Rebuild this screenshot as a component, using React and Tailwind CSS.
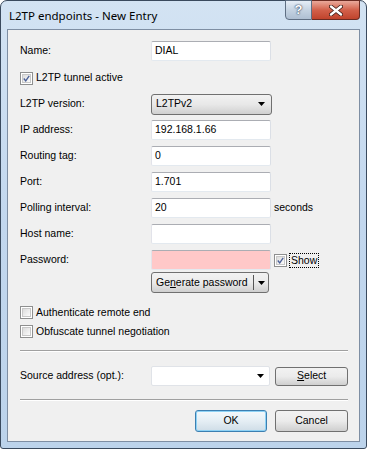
import React from "react";

const font = { fontFamily: '"Liberation Sans", Arial, sans-serif' };

function Checkbox({ checked }) {
  return (
    <div className="w-[13px] h-[13px] border border-[#8e8f8f] bg-white p-px shrink-0">
      <div className="w-full h-full bg-gradient-to-br from-[#dcdcdc] to-[#fbfbfb] border border-[#c8c8c8] flex items-center justify-center">
        {checked && (
          <svg width="9" height="9" viewBox="0 0 9 9">
            <path d="M1 4.5 L3.5 7.5 L8 1" fill="none" stroke="#4a5f97" strokeWidth="1.7" />
          </svg>
        )}
      </div>
    </div>
  );
}

function TextBox({ value, pink, w = "w-[120px]" }) {
  return (
    <div
      className={`${w} h-[20px] rounded-[2px] border border-[#abadb3] border-l-[#e2e3ea] border-r-[#dbdfe6] border-b-[#e3e9ef] ${
        pink ? "bg-[#ffc8c8]" : "bg-white"
      } flex items-center pl-[3px] text-[10.5px] text-black`}
    >
      {value}
    </div>
  );
}

function Arrow() {
  return (
    <svg width="7" height="4" viewBox="0 0 7 4">
      <path d="M0 0 H7 L3.5 4 Z" fill="#000" />
    </svg>
  );
}

function Row({ label, children }) {
  return (
    <div className="flex items-center h-[20px]">
      <div className="w-[131px] text-[10.5px] text-black shrink-0">{label}</div>
      {children}
    </div>
  );
}

export default function App() {
  return (
    <div style={font} className="w-[367px] h-[449px] overflow-hidden">
      <div className="w-[367px] h-[449px] rounded-t-[7px] rounded-b-[3px] border border-[#3a4a5e] bg-gradient-to-b from-[#d3e3f3] via-[#c2d7ee] to-[#bcd3eb] flex flex-col">
        <div className="h-[28px] flex justify-between items-start shrink-0">
          <div
            className="pl-[8px] pt-[6px] text-[11.5px] text-black"
            style={{ fontFamily: '"Noto Sans", "Open Sans", sans-serif' }}
          >
            L2TP endpoints - New Entry
          </div>
          <div className="flex mr-[6px] -mt-px">
            <div className="w-[27px] h-[20px] rounded-bl-[4px] border border-[#5f6f83] bg-gradient-to-b from-[#e6eef7] via-[#c5d3e2] to-[#aebfd2] flex items-center justify-center text-white font-bold text-[13px] [text-shadow:0_0_2px_#2b3b55,0_0_1px_#2b3b55]">
              ?
            </div>
            <div className="w-[48px] h-[20px] rounded-br-[4px] border border-l-0 border-[#6b2b22] bg-gradient-to-b from-[#e9a99b] via-[#d2604a] to-[#c0432c] flex items-center justify-center">
              <svg width="14" height="11" viewBox="0 0 14 11">
                <path d="M2 1.5 L12 9.5 M12 1.5 L2 9.5" stroke="#3b1a14" strokeWidth="4" strokeLinecap="round" />
                <path d="M2 1.5 L12 9.5 M12 1.5 L2 9.5" stroke="#fff" strokeWidth="2.4" strokeLinecap="round" />
              </svg>
            </div>
          </div>
        </div>
        <div className="mx-[6px] mb-[6px] flex-1 border border-[#7e8ea3] bg-[#f0f0f0] flex flex-col pl-[12px] pr-[11px] pt-[11px]">
          <div className="flex flex-col gap-[6px]">
            <Row label="Name:">
              <TextBox value="DIAL" />
            </Row>
            <div className="flex items-center h-[20px] gap-[3px] mt-px">
              <Checkbox checked />
              <span className="text-[10.5px] text-black">L2TP tunnel active</span>
            </div>
            <Row label="L2TP version:">
              <div className="w-[121px] h-[21px] rounded-[3px] border border-[#707070] bg-gradient-to-b from-[#f2f2f2] via-[#e8e8e8] to-[#d0d0d0] flex items-center justify-between pl-[4px] pr-[6px] text-[10.5px] text-black">
                <span>L2TPv2</span>
                <Arrow />
              </div>
            </Row>
            <Row label="IP address:">
              <TextBox value="192.168.1.66" />
            </Row>
            <Row label="Routing tag:">
              <TextBox value="0" />
            </Row>
            <Row label="Port:">
              <TextBox value="1.701" />
            </Row>
            <Row label="Polling interval:">
              <TextBox value="20" />
              <span className="ml-[3px] text-[10.5px] text-black">seconds</span>
            </Row>
            <Row label="Host name:">
              <TextBox value="" />
            </Row>
            <Row label="Password:">
              <TextBox value="" pink />
              <div className="ml-[3px] flex items-center gap-[2px]">
                <Checkbox checked />
                <span className="text-[10.5px] text-black px-px border border-dotted border-black leading-[13px]">
                  Show
                </span>
              </div>
            </Row>
          </div>
          <div className="flex mt-[2px] h-[21px]">
            <div className="w-[131px] shrink-0" />
            <div className="w-[118px] h-[21px] rounded-[3px] border border-[#707070] bg-gradient-to-b from-[#f2f2f2] via-[#ebebeb] to-[#cfcfcf] flex items-center text-[10.5px] text-black">
              <span className="pl-[4px] flex-1 whitespace-nowrap">
                Ge<span className="underline">n</span>erate password
              </span>
              <div className="w-px h-[15px] bg-[#555]" />
              <div className="w-[14px] flex justify-center">
                <Arrow />
              </div>
            </div>
          </div>
          <div className="flex flex-col mt-[10px]">
            <div className="flex items-center h-[19px] gap-[3px]">
              <Checkbox />
              <span className="text-[10.5px] text-black">Authenticate remote end</span>
            </div>
            <div className="flex items-center h-[19px] gap-[3px]">
              <Checkbox />
              <span className="text-[10.5px] text-black">Obfuscate tunnel negotiation</span>
            </div>
          </div>
          <div className="mt-[9px] h-[2px] border-t border-[#a0a0a0] border-b border-b-white" />
          <div className="mt-[14px]">
            <Row label="Source address (opt.):">
              <div className="w-[120px] h-[20px] rounded-[2px] border border-[#e0e3e8] bg-white flex items-center justify-end pr-[5px]">
                <Arrow />
              </div>
              <div className="ml-[5px] w-[73px] h-[19px] rounded-[3px] border border-[#707070] bg-gradient-to-b from-[#f2f2f2] via-[#ebebeb] to-[#cfcfcf] flex items-center justify-center text-[10.5px] text-black">
                <span>
                  <span className="underline">S</span>elect
                </span>
              </div>
            </Row>
          </div>
          <div className="mt-[13px] h-[2px] border-t border-[#a0a0a0] border-b border-b-white" />
          <div className="mt-[9px] flex justify-end gap-[8px]">
            <div className="w-[72px] h-[22px] rounded-[3px] border border-[#3c7fb1] bg-gradient-to-b from-[#f4f9fc] via-[#e5eef4] to-[#cfdde7] shadow-[inset_0_0_0_1px_#8ed2f5] flex items-center justify-center text-[10.5px] text-black">
              OK
            </div>
            <div className="w-[73px] h-[22px] rounded-[3px] border border-[#707070] bg-gradient-to-b from-[#f2f2f2] via-[#ebebeb] to-[#cfcfcf] flex items-center justify-center text-[10.5px] text-black">
              Cancel
            </div>
          </div>
        </div>
      </div>
    </div>
  );
}
